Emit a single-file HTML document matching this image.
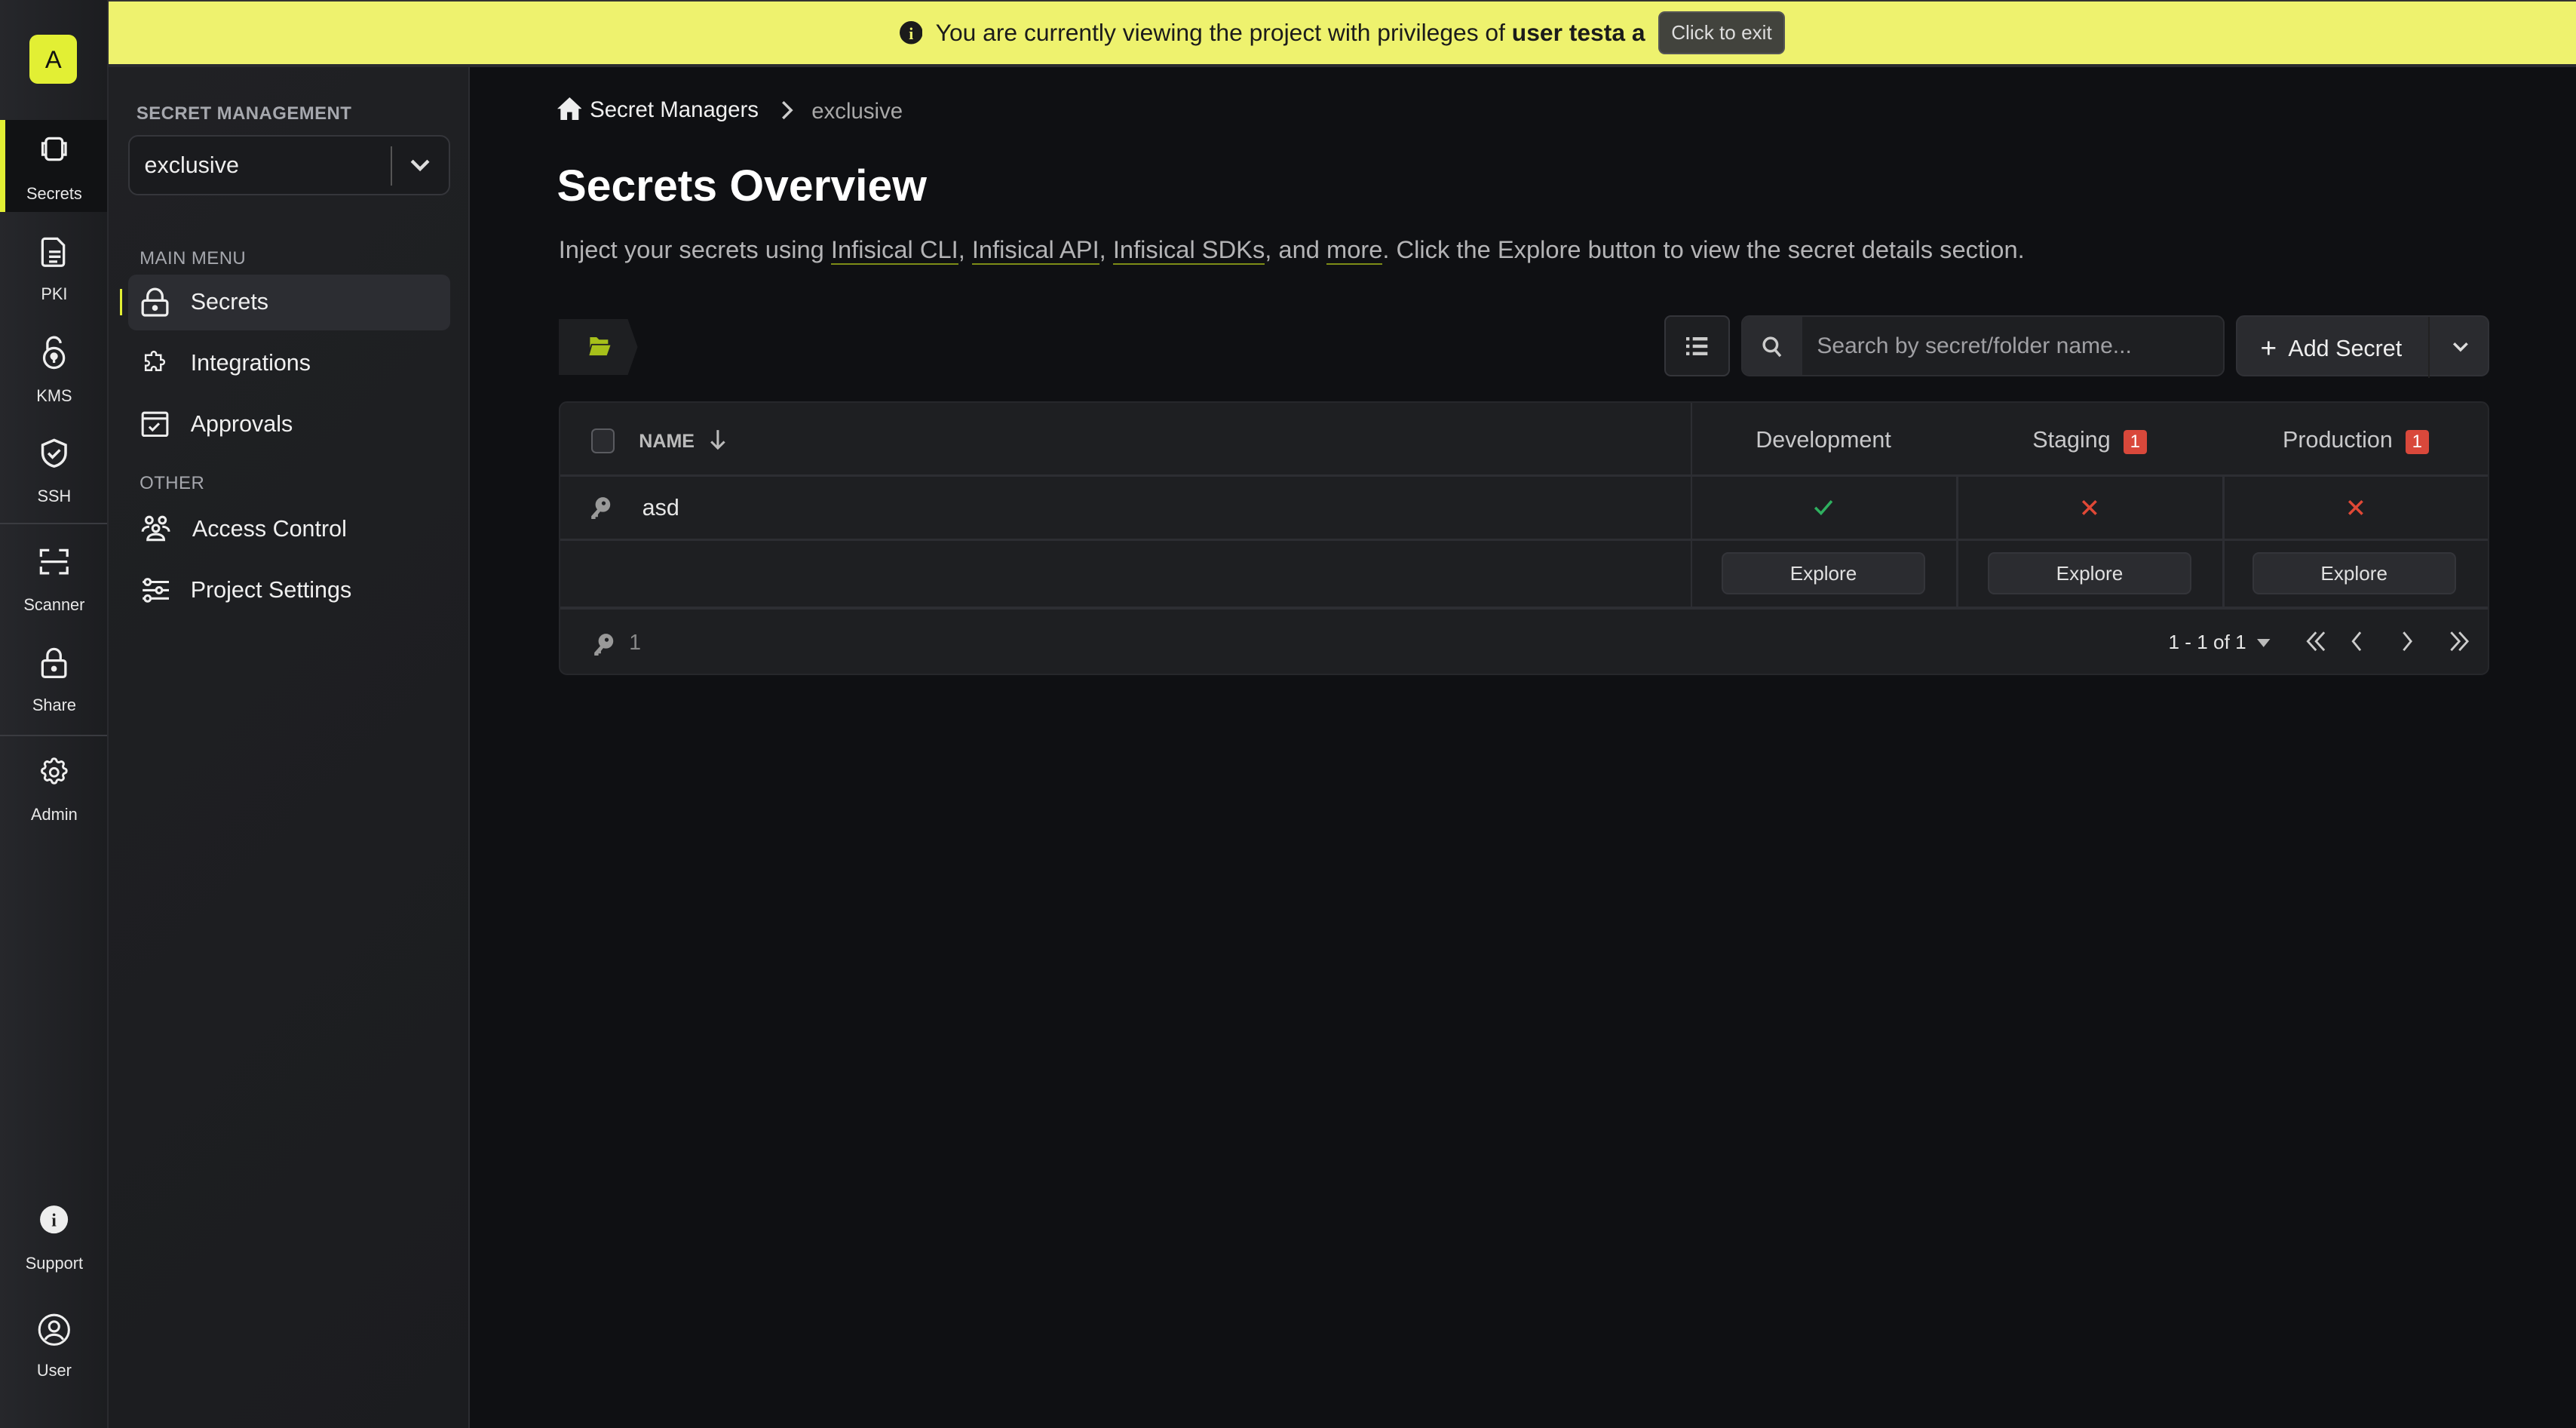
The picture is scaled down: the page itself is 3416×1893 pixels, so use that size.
<!DOCTYPE html>
<html><head><meta charset="utf-8"><style>
*{box-sizing:border-box;margin:0;padding:0}
html{zoom:2.178571}
body{width:1568px;height:868.5px;overflow:hidden;background:#0f1013;font-family:"Liberation Sans",sans-serif;position:relative;color:#fff}
.abs{position:absolute}
.rail{left:0;top:0;width:66px;height:869px;background:linear-gradient(90deg,#26272b,#1c1d20);border-right:1px solid #2a2b2f}
.ri{position:absolute;left:0;width:66px;text-align:center;font-size:10px;color:#e8e8e8}
.ri svg{display:block;margin:0 auto}
.ri div{position:relative;top:3px}
.side{left:66px;top:41px;width:220px;height:828px;background:linear-gradient(135deg,#202124,#1b1c1f);border-right:1px solid #2c2d31}
.lbl{font-size:11px;color:#a6a8ae;letter-spacing:.2px}
.mi{position:absolute;left:78px;width:196px;height:34px;display:flex;align-items:center;font-size:14px;color:#f0f0f0;border-radius:5px}
.mi svg{margin-left:8px;margin-right:13px}
.tbl{left:340px;top:244px;width:1175px;height:167px;background:#1e1f22;border:1px solid #26272b;border-radius:5px;overflow:hidden}
.btn{background:#2b2c30;border:1px solid #34353a;border-radius:4px;color:#e0e0e0;font-size:12px;display:flex;align-items:center;justify-content:center}
u{text-decoration:none;border-bottom:1px solid #7d8c17}
</style></head><body>
<div class="abs rail">
 <div class="abs" style="left:18px;top:21px;width:29px;height:30px;background:#e2ef34;border-radius:5px;color:#111;font-size:15px;text-align:center;line-height:30px">A</div>
 <div class="abs" style="left:0;top:73px;width:65px;height:56px;background:#111214"></div>
 <div class="abs" style="left:0;top:73px;width:3px;height:56px;background:#e2ef34"></div>
 <div class="ri" style="top:82px"><svg width="20" height="18" viewBox="0 0 20 18" fill="none" stroke="#eee" stroke-width="1.5"><rect x="5" y="2" width="10" height="13" rx="2"/><path d="M5 5H3v7h2M15 5h2v7h-2"/></svg><div style="margin-top:9px">Secrets</div></div>
 <div class="ri" style="top:143px"><svg width="18" height="20" viewBox="0 0 18 20" fill="none" stroke="#eee" stroke-width="1.5"><path d="M3 2h8l4 4v11a1.5 1.5 0 0 1-1.5 1.5h-10A1.5 1.5 0 0 1 2 17V3.5A1.5 1.5 0 0 1 3.5 2zM6 10h7M6 13h7M6 16h5"/></svg><div style="margin-top:7px">PKI</div></div>
 <div class="ri" style="top:204px"><svg width="18" height="21" viewBox="0 0 18 21" fill="none" stroke="#eee" stroke-width="1.5"><path d="M5 9V6a4 4 0 0 1 8-1"/><circle cx="9" cy="14" r="6"/><circle cx="9" cy="13" r="1.6" fill="#eee"/><path d="M9 14v3"/></svg><div style="margin-top:7px">KMS</div></div>
 <div class="ri" style="top:266px"><svg width="20" height="20" viewBox="0 0 20 20" fill="none" stroke="#eee" stroke-width="1.6"><path d="M10 2l7 3v5c0 4-3 7-7 8-4-1-7-4-7-8V5z"/><path d="M6.5 10l2.5 2.5 4.5-4.5"/></svg><div style="margin-top:7px">SSH</div></div>
 <div class="abs" style="left:0;top:318px;width:65px;height:1px;background:#3a3b40"></div>
 <div class="ri" style="top:333px"><svg width="20" height="18" viewBox="0 0 20 18" fill="none" stroke="#eee" stroke-width="1.5"><path d="M2 6V2h5M13 2h5v4M2 12v4h5M13 16h5v-4M2 9h16"/></svg><div style="margin-top:8px">Scanner</div></div>
 <div class="ri" style="top:393px"><svg width="18" height="20" viewBox="0 0 18 20" fill="none" stroke="#eee" stroke-width="1.5"><rect x="2" y="9" width="14" height="10" rx="1.5"/><path d="M5 9V6a4 4 0 0 1 8 0v3"/><circle cx="9" cy="14" r="1" fill="#eee"/></svg><div style="margin-top:7px">Share</div></div>
 <div class="abs" style="left:0;top:447px;width:65px;height:1px;background:#3a3b40"></div>
 <div class="ri" style="top:460px"><svg width="20" height="20" viewBox="0 0 24 24" fill="none" stroke="#eee" stroke-width="1.6"><path d="M10.3 3.3c.4-1.7 2.9-1.7 3.4 0a1.7 1.7 0 0 0 2.6 1.1c1.5-.9 3.3.8 2.4 2.4a1.7 1.7 0 0 0 1 2.5c1.8.4 1.8 2.9 0 3.4a1.7 1.7 0 0 0-1 2.5c.9 1.5-.9 3.3-2.4 2.4a1.7 1.7 0 0 0-2.6 1.1c-.4 1.7-2.9 1.7-3.4 0a1.7 1.7 0 0 0-2.5-1.1c-1.5.9-3.3-.9-2.4-2.4a1.7 1.7 0 0 0-1.1-2.5c-1.7-.4-1.7-2.9 0-3.4a1.7 1.7 0 0 0 1.1-2.5c-.9-1.5.9-3.3 2.4-2.4 1 .6 2.3.1 2.5-1.1z"/><circle cx="12" cy="12" r="3"/></svg><div style="margin-top:7px">Admin</div></div>
 <div class="ri" style="top:733px"><svg width="18" height="18" viewBox="0 0 18 18"><circle cx="9" cy="9" r="8.5" fill="#eee"/><text x="9" y="13" font-size="11" font-weight="bold" text-anchor="middle" fill="#222" font-family="Liberation Serif">i</text></svg><div style="margin-top:9px">Support</div></div>
 <div class="ri" style="top:799px"><svg width="20" height="20" viewBox="0 0 20 20" fill="none" stroke="#eee" stroke-width="1.4"><circle cx="10" cy="10" r="9"/><circle cx="10" cy="8" r="3"/><path d="M4.5 16c1.5-2.5 3.5-3 5.5-3s4 .5 5.5 3"/></svg><div style="margin-top:6px">User</div></div>
</div>

<div class="abs" style="left:66px;top:0;width:1502px;height:41px;background:#eef26e;border-top:1px solid #333;border-bottom:2px solid #2a2b2f;display:flex;align-items:center;justify-content:center;color:#1b1b1b;font-size:14.6px">
 <svg width="14" height="14" viewBox="0 0 14 14" style="margin-right:8px;margin-left:0px"><circle cx="7" cy="7" r="7" fill="#1b1b1b"/><text x="7" y="11" font-size="10" font-weight="bold" text-anchor="middle" fill="#eef26e" font-family="Liberation Serif">i</text></svg>
 You are currently viewing the project with privileges of&nbsp;<b>user testa a</b>
 <span style="margin-left:8px;background:#42433d;border:1px solid #555;color:#ddd;font-size:12px;border-radius:4px;padding:5px 7px">Click to exit</span>
</div>

<div class="abs side">
 <div class="abs lbl" style="left:17px;top:22px;font-weight:bold">SECRET MANAGEMENT</div>
 <div class="abs" style="left:12px;top:41px;width:196px;height:37px;border:1px solid #35363b;border-radius:6px;background:#1a1b1e">
  <div class="abs" style="left:9px;top:10px;font-size:14px;color:#eee">exclusive</div>
  <div class="abs" style="left:159px;top:6px;width:1px;height:24px;background:#555"></div>
  <svg class="abs" style="left:171px;top:14px" width="12" height="8" viewBox="0 0 12 8" fill="none" stroke="#ddd" stroke-width="2"><path d="M1 1l5 5 5-5"/></svg>
 </div>
 <div class="abs lbl" style="left:19px;top:110px">MAIN MENU</div>
 <div class="abs lbl" style="left:19px;top:247px">OTHER</div>
</div>
<div class="abs" style="left:73px;top:176px;width:1.5px;height:16px;background:#e2ef34"></div>
<div class="mi" style="top:167px;background:#2c2d32"><svg width="17" height="18" viewBox="0 0 17 18" fill="none" stroke="#eee" stroke-width="1.5"><rect x="1" y="8" width="15" height="9" rx="1.5"/><path d="M4 8V5.5a4.5 4.5 0 0 1 9 0V8"/><circle cx="8.5" cy="12.5" r="1" fill="#eee"/></svg>Secrets</div>
<div class="mi" style="top:204px"><svg width="17" height="17" viewBox="0 0 24 24" fill="none" stroke="#eee" stroke-width="1.6"><path d="M9 4a2 2 0 0 1 4 0v1h4v4h1a2 2 0 0 1 0 4h-1v5h-4v-1a2 2 0 0 0-4 0v1H4v-4h1a2 2 0 0 0 0-4H4V5h5z"/></svg>Integrations</div>
<div class="mi" style="top:241px"><svg width="17" height="16" viewBox="0 0 17 16" fill="none" stroke="#eee" stroke-width="1.4"><rect x="1" y="1" width="15" height="14" rx="1"/><path d="M1 4.5h15M5 9.5l2 2 4-4"/></svg>Approvals</div>
<div class="mi" style="top:305px"><svg width="18" height="17" viewBox="0 0 18 17" fill="none" stroke="#eee" stroke-width="1.4"><circle cx="5" cy="3" r="2"/><circle cx="13" cy="3" r="2"/><circle cx="9" cy="8" r="2"/><path d="M1 10c0-2 2-3 4-3M17 10c0-2-2-3-4-3M4 15c0-2.5 2.5-3.5 5-3.5s5 1 5 3.5z"/></svg>Access Control</div>
<div class="mi" style="top:342px"><svg width="17" height="16" viewBox="0 0 17 16" fill="none" stroke="#eee" stroke-width="1.4"><path d="M1 3h16M1 8h16M1 13h16"/><circle cx="4" cy="3" r="1.8" fill="#202124"/><circle cx="11" cy="8" r="1.8" fill="#202124"/><circle cx="4" cy="13" r="1.8" fill="#202124"/></svg>Project Settings</div>

<!-- main -->
<svg class="abs" style="left:339px;top:59px" width="15" height="14" viewBox="0 0 15 14"><path d="M7.5 0L0 7h2v7h4V9h3v5h4V7h2z" fill="#eee"/></svg>
<div class="abs" style="left:359px;top:59px;font-size:13.5px;color:#f0f0f0">Secret Managers</div>
<svg class="abs" style="left:475px;top:61px" width="8" height="12" viewBox="0 0 8 12" fill="none" stroke="#ccc" stroke-width="1.6"><path d="M1.5 1l5 5-5 5"/></svg>
<div class="abs" style="left:494px;top:60px;font-size:13.5px;color:#a8a8a8">exclusive</div>
<div class="abs" style="left:339px;top:98px;font-size:27px;font-weight:bold;color:#fff">Secrets Overview</div>
<div class="abs" style="left:340px;top:143px;font-size:15px;color:#b4b4b6;white-space:nowrap">Inject your secrets using <u>Infisical CLI</u>, <u>Infisical API</u>, <u>Infisical SDKs</u>, and <u>more</u>. Click the Explore button to view the secret details section.</div>

<svg class="abs" style="left:340px;top:194px" width="50" height="34" viewBox="0 0 50 34"><path d="M0 0h42l6 17-6 17H0z" fill="#1e1f22"/><path d="M19 11h4l1.5 1.5H30v3H22l-3 7z" fill="#a7c01a"/><path d="M20 15.5h12l-2.5 7H18z" fill="#a7c01a" stroke="#1e1f22" stroke-width=".8"/></svg>
<div class="abs btn" style="left:1013px;top:192px;width:40px;height:37px;background:#1e1f22"><svg width="13" height="11" viewBox="0 0 13 11" fill="#ccc"><rect x="0" y="0" width="2" height="2"/><rect x="0" y="4.5" width="2" height="2"/><rect x="0" y="9" width="2" height="2"/><rect x="4" y="0" width="9" height="2"/><rect x="4" y="4.5" width="9" height="2"/><rect x="4" y="9" width="9" height="2"/></svg></div>
<div class="abs" style="left:1060px;top:192px;width:294px;height:37px;border:1px solid #2c2d31;border-radius:5px;background:#1e1f22;overflow:hidden">
 <div class="abs" style="left:0;top:0;width:36px;height:37px;background:#2a2b2f"></div>
 <svg class="abs" style="left:12px;top:12px" width="12" height="13" viewBox="0 0 12 13" fill="none" stroke="#ccc" stroke-width="1.6"><circle cx="5" cy="5" r="4"/><path d="M8 8.5l3 3.5"/></svg>
 <div class="abs" style="left:45px;top:10px;font-size:13.8px;color:#a0a0a4">Search by secret/folder name...</div>
</div>
<div class="abs" style="left:1361px;top:192px;width:154px;height:37px;background:#2a2b2f;border:1px solid #303136;border-radius:5px">
 <div class="abs" style="left:14px;top:8px;font-size:14px;color:#eee"><span style="font-size:17px;position:relative;top:1px">+</span>&nbsp; Add Secret</div>
 <div class="abs" style="left:116px;top:0;width:1px;height:37px;background:#222"></div>
 <svg class="abs" style="left:131px;top:15px" width="10" height="7" viewBox="0 0 10 7" fill="none" stroke="#ddd" stroke-width="1.6"><path d="M1 1l4 4 4-4"/></svg>
</div>

<div class="abs tbl">
 <div class="abs" style="left:0;top:44px;width:1175px;height:1px;background:#2d2e33"></div>
 <div class="abs" style="left:0;top:83px;width:1175px;height:1px;background:#2d2e33"></div>
 <div class="abs" style="left:0;top:124px;width:1175px;height:2px;background:#2d2e33"></div>
 <div class="abs" style="left:688px;top:0;width:1px;height:125px;background:#2d2e33"></div>
 <div class="abs" style="left:850px;top:45px;width:1px;height:80px;background:#2d2e33"></div>
 <div class="abs" style="left:1012px;top:45px;width:1px;height:80px;background:#2d2e33"></div>
 <div class="abs" style="left:19px;top:16px;width:14px;height:15px;border:1px solid #5a5b60;border-radius:3px;background:#2a2b2f"></div>
 <div class="abs" style="left:48px;top:17px;font-size:11.5px;font-weight:bold;color:#bbb">NAME</div>
 <svg class="abs" style="left:91px;top:16px" width="10" height="14" viewBox="0 0 10 14" fill="none" stroke="#bbb" stroke-width="1.4"><path d="M5 1v11M1 8l4 4 4-4"/></svg>
 <div class="abs" style="left:688px;top:15px;width:162px;text-align:center;font-size:14px;color:#c8c8ca">Development</div>
 <div class="abs" style="left:850px;top:15px;width:162px;text-align:center;font-size:14px;color:#c8c8ca">Staging <span style="display:inline-block;background:#d9483b;color:#fff;font-size:11px;padding:1px 4px;border-radius:2px;margin-left:4px">1</span></div>
 <div class="abs" style="left:1012px;top:15px;width:162px;text-align:center;font-size:14px;color:#c8c8ca">Production <span style="display:inline-block;background:#d9483b;color:#fff;font-size:11px;padding:1px 4px;border-radius:2px;margin-left:4px">1</span></div>
 <svg class="abs" style="left:18px;top:57px" width="13" height="14" viewBox="0 0 13 14" fill="#999"><circle cx="8" cy="5" r="4.5"/><circle cx="8.5" cy="4.2" r="1.2" fill="#1e1f22"/><path d="M5 7.5L1 12v2h2.5v-1.5H5V11l2-2.5z"/></svg>
 <div class="abs" style="left:50px;top:56px;font-size:14px;color:#e6e6e6">asd</div>
 <svg class="abs" style="left:763px;top:59px" width="12" height="10" viewBox="0 0 12 10" fill="none" stroke="#2fb060" stroke-width="1.6"><path d="M1 5l3.5 3.5L11 1"/></svg>
 <svg class="abs" style="left:926px;top:59px" width="10" height="10" viewBox="0 0 10 10" fill="none" stroke="#e04836" stroke-width="1.6"><path d="M1 1l8 8M9 1l-8 8"/></svg>
 <svg class="abs" style="left:1088px;top:59px" width="10" height="10" viewBox="0 0 10 10" fill="none" stroke="#e04836" stroke-width="1.6"><path d="M1 1l8 8M9 1l-8 8"/></svg>
 <div class="abs btn" style="left:707px;top:91px;width:124px;height:26px">Explore</div>
 <div class="abs btn" style="left:869px;top:91px;width:124px;height:26px">Explore</div>
 <div class="abs btn" style="left:1030px;top:91px;width:124px;height:26px">Explore</div>
 <svg class="abs" style="left:20px;top:140px" width="13" height="14" viewBox="0 0 13 14" fill="#999"><circle cx="8" cy="5" r="4.5"/><circle cx="8.5" cy="4.2" r="1.2" fill="#1e1f22"/><path d="M5 7.5L1 12v2h2.5v-1.5H5V11l2-2.5z"/></svg>
 <div class="abs" style="left:42px;top:139px;font-size:13px;color:#888">1</div>
 <div class="abs" style="left:979px;top:139px;font-size:12px;color:#e6e6e6">1 - 1 of 1</div>
 <svg class="abs" style="left:1033px;top:144px" width="8" height="5" viewBox="0 0 8 5"><path d="M0 0h8L4 5z" fill="#bbb"/></svg>
 <svg class="abs" style="left:1062px;top:139px" width="14" height="13" viewBox="0 0 14 13" fill="none" stroke="#ccc" stroke-width="1.3"><path d="M7 1L2 6.5 7 12M12 1L7 6.5 12 12"/></svg>
 <svg class="abs" style="left:1090px;top:139px" width="8" height="13" viewBox="0 0 8 13" fill="none" stroke="#ccc" stroke-width="1.3"><path d="M6 1L1.5 6.5 6 12"/></svg>
 <svg class="abs" style="left:1120px;top:139px" width="8" height="13" viewBox="0 0 8 13" fill="none" stroke="#ccc" stroke-width="1.3"><path d="M2 1l4.5 5.5L2 12"/></svg>
 <svg class="abs" style="left:1149px;top:139px" width="14" height="13" viewBox="0 0 14 13" fill="none" stroke="#ccc" stroke-width="1.3"><path d="M2 1l5 5.5L2 12M7 1l5 5.5L7 12"/></svg>
</div>
</body></html>
